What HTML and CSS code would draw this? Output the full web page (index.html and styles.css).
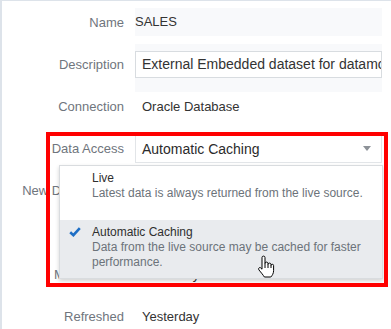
FILE: index.html
```html
<!DOCTYPE html>
<html lang="en">
<head>
  <meta charset="UTF-8" />
  <title>Dataset Properties</title>
  <link rel="stylesheet" href="styles.css">
</head>
<body>
  <div class="page">
    <div class="props">
      <div class="label">Name</div>
      <div class="value name-box">SALES</div>

      <div class="label">Description</div>
      <div class="desc-box">
        <div class="text-input">External Embedded dataset for datamodel SALES</div>
      </div>

      <div class="label">Connection</div>
      <div class="value indent">Oracle Database</div>

      <div class="label">Data Access</div>
      <div class="select">
        <span>Automatic Caching</span>
        <span class="arrow"></span>
      </div>

      <div class="label">New Data Access</div>
      <div class="value indent"></div>

      <div class="label"></div>
      <div class="value indent"></div>

      <div class="label">Modified On</div>
      <div class="value indent">Yesterday</div>

      <div class="label">Refreshed</div>
      <div class="value indent">Yesterday</div>
    </div>

    <!-- open list of the Data Access select -->
    <div class="menu">
      <div class="option">
        <div class="opt-title">Live</div>
        <div class="opt-desc">Latest data is always returned from the live source.</div>
      </div>
      <div class="option selected">
        <svg class="check" width="12" height="10" viewBox="0 0 12 10">
          <path d="M1.2 5.2 L4.4 8.2 L10.8 1.2" fill="none" stroke="#1f6fc5" stroke-width="2.6"/>
        </svg>
        <div class="opt-title">Automatic Caching</div>
        <div class="opt-desc">Data from the live source may be cached for faster performance.</div>
      </div>
    </div>

    <div class="highlight"></div>

    <svg class="cursor" width="19" height="24" viewBox="0 0 19 24">
      <path d="M5 11 V2.6 A1.5 1.5 0 0 1 8 2.6 V8.6 A1.5 1.5 0 0 1 11 8.6 V9.6 A1.5 1.5 0 0 1 14 9.6 V10.6 A1.3 1.3 0 0 1 16.6 10.6 V15.5 C16.6 18.5 15.2 20.5 13.8 22 H7.4 C6.2 20.2 4.2 17.6 2 15 C1.1 13.9 1.8 12.2 3.3 12.6 L5 14.2 Z" fill="#fff" stroke="#000" stroke-width="1"/>
      <path d="M8 8.6 V13 M11 9.6 V13 M14 10.6 V13" fill="none" stroke="#000" stroke-width="1"/>
    </svg>
  </div>
</body>
</html>
```

FILE: styles.css
```css
body {
  margin: 0;
  padding: 0;
  background: #fff;
  font-family: 'Liberation Sans', Arial, sans-serif;
  overflow: hidden;
}

.page {
  position: relative;
  height: 329px;
  box-sizing: border-box;
  border-top: 1px solid #dde3ea;
  border-left: 2px solid #dde3ea;
}

.props {
  display: grid;
  grid-template-columns: 122px 247px;
  grid-auto-rows: 42px;
  column-gap: 11px;
  align-items: center;
}

.label {
  text-align: right;
  font-size: 13px;
  color: #6f757d;
  white-space: nowrap;
}

.value {
  font-size: 13px;
  color: #333;
  white-space: nowrap;
}

.indent {
  padding-left: 7px;
}

.name-box {
  height: 28px;
  line-height: 28px;
  background: #f8f9fb;
}

.desc-box {
  align-self: start;
  margin-top: 1px;
  padding: 7px 0 14px 0;
  background: #f8f9fb;
}

.text-input {
  height: 27px;
  line-height: 25px;
  box-sizing: border-box;
  border: 1px solid #d8dce0;
  background: #fff;
  padding: 0 6px;
  font-size: 14px;
  color: #333;
  white-space: nowrap;
  overflow: hidden;
}

.select {
  height: 29px;
  box-sizing: border-box;
  margin-top: 1px;
  border: 1px solid #e2e5e8;
  background: #fff;
  padding: 0 10px 0 6px;
  display: flex;
  align-items: center;
  justify-content: space-between;
  font-size: 14px;
  color: #2b2b2b;
}

.arrow {
  width: 0;
  height: 0;
  border-left: 4px solid transparent;
  border-right: 4px solid transparent;
  border-top: 5px solid #8d9298;
}

.menu {
  position: absolute;
  left: 57px;
  top: 164px;
  width: 324px;
  height: 114px;
  box-sizing: border-box;
  background: #fff;
  border: 1px solid #d9dcdf;
  box-shadow: 0 2px 4px rgba(0, 0, 0, 0.18);
  display: flex;
  flex-direction: column;
}

.option {
  position: relative;
  padding: 5px 6px 0 32px;
  font-size: 12px;
  line-height: 15px;
}

.option:first-child {
  height: 54px;
  box-sizing: border-box;
}

.option.selected {
  flex: 1;
  background: #e9ebee;
}

.opt-title {
  color: #2f2f2f;
}

.opt-desc {
  color: #6c737a;
}

.check {
  position: absolute;
  left: 9px;
  top: 7px;
}

.highlight {
  position: absolute;
  left: 44px;
  top: 131px;
  width: 342px;
  height: 155px;
  box-sizing: border-box;
  border: 4px solid #ff0000;
}

.cursor {
  position: absolute;
  left: 255px;
  top: 254px;
}
```
